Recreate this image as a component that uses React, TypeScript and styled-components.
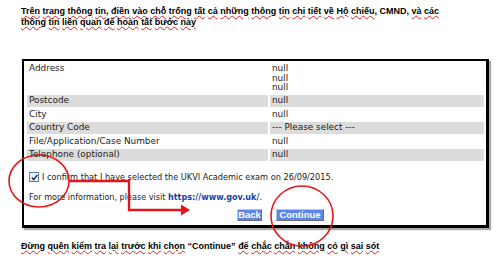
import React from "react";
import styled, { createGlobalStyle } from "styled-components";

const Global = createGlobalStyle`
  html, body { margin: 0; padding: 0; background: #fff; }
  body { width: 500px; height: 262px; overflow: hidden; }
`;

const Page = styled.div`
  position: relative;
  width: 500px;
  height: 262px;
  padding: 6px 0 0 21px;
  box-sizing: border-box;
  font-family: "Liberation Sans", Arial, sans-serif;
`;

const Note = styled.p<{ $top?: number }>`
  margin: ${(p) => p.$top ?? 0}px 0 0 0;
  font-size: 9px;
  line-height: 11px;
  font-weight: bold;
  color: #000;
  width: 440px;
`;

const W = styled.span`
  text-decoration: underline wavy #e02020;
  text-decoration-thickness: 1px;
  text-underline-offset: 1px;
`;

const Frame = styled.div`
  margin: 31px 0 0 1px;
  width: 467px;
  height: 169px;
  box-sizing: border-box;
  border: 2px solid #000;
  border-right-width: 3px;
  border-bottom-width: 3px;
  box-shadow: 2px 2px 1px #a8a8a8;
  padding: 2px 2px 0 3px;
  font-family: "DejaVu Sans", Verdana, sans-serif;
  font-size: 7.8px;
  color: #222;
  display: flex;
  flex-direction: column;
`;

const Table = styled.div`
  display: grid;
  grid-template-columns: 241px 214px;
  column-gap: 2px;
  row-gap: 2px;
  font-size: 8.9px;
`;

const Cell = styled.div<{ $gray?: boolean; $tall?: boolean }>`
  background: ${(p) => (p.$gray ? "#dcdcdc" : "transparent")};
  height: ${(p) => (p.$tall ? "30px" : "11.5px")};
  line-height: ${(p) => (p.$tall ? "9.5px" : "11.5px")};
  padding: ${(p) => (p.$tall ? "1px 2px 0" : "0 2px")};
  box-sizing: border-box;
  white-space: nowrap;
`;

const Confirm = styled.label`
  display: flex;
  align-items: center;
  gap: 3px;
  margin: 11px 0 0 2px;
  height: 11px;
  font-size: 8.2px;
  white-space: nowrap;
`;

const Box = styled.span`
  width: 8px;
  height: 8px;
  flex: none;
  border: 1px solid #5a7fb8;
  background: #eef3fb;
  display: flex;
  align-items: center;
  justify-content: center;
`;

const Info = styled.div`
  margin: 9px 0 0 2px;
  line-height: 11px;
  font-size: 8.1px;
`;

const Link = styled.span`
  color: #1a3fa8;
  font-weight: bold;
`;

const Buttons = styled.div`
  display: flex;
  gap: 14px;
  margin: 6px 0 0 210px;
`;

const Btn = styled.span<{ $w: number }>`
  width: ${(p) => p.$w}px;
  height: 12px;
  box-sizing: border-box;
  background: #5c86ec;
  border: 1px solid #b7c6e6;
  border-right-color: #6d6d6d;
  border-bottom-color: #6d6d6d;
  color: #fff;
  font-family: "Liberation Sans", Arial, sans-serif;
  font-weight: bold;
  font-size: 9.5px;
  line-height: 10px;
  text-align: center;
  white-space: nowrap;
`;

const Overlay = styled.svg`
  position: absolute;
  left: 0;
  top: 0;
  pointer-events: none;
`;

const rows: [string, string, boolean][] = [
  ["Postcode", "null", true],
  ["City", "null", false],
  ["Country Code", "--- Please select ---", true],
  ["File/Application/Case Number", "null", false],
  ["Telephone (optional)", "null", true],
];

const words = (s: string, skip: string[] = []) =>
  s.split(" ").map((w, i, arr) => (
    <React.Fragment key={i}>
      {skip.includes(w) ? w : <W>{w.replace(/[,.]$/, "")}</W>}
      {!skip.includes(w) && /[,.]$/.test(w) ? w.slice(-1) : ""}
      {i < arr.length - 1 ? " " : ""}
    </React.Fragment>
  ));

export default function App() {
  return (
    <Page>
      <Global />
      <Note>
        {words(
          "Trên trang thông tin, điền vào chỗ trống tất cả những thông tin chi tiết về Hộ chiếu,"
        )}{" "}
        CMND, {words("và các thông tin liên quan để hoàn tất bước này")}
      </Note>
      <Frame>
        <Table>
          <Cell $tall>Address</Cell>
          <Cell $tall>
            null
            <br />
            null
            <br />
            null
          </Cell>
          {rows.map(([l, v, g]) => (
            <React.Fragment key={l}>
              <Cell $gray={g}>{l}</Cell>
              <Cell $gray={g}>{v}</Cell>
            </React.Fragment>
          ))}
        </Table>
        <Confirm>
          <Box>
            <svg width="7" height="7" viewBox="0 0 7 7">
              <path d="M0.8 3.6 L2.7 5.6 L6.3 1" stroke="#1b2f5a" strokeWidth="1.4" fill="none" />
            </svg>
          </Box>
          I confirm that I have selected the UKVI Academic exam on 26/09/2015.
        </Confirm>
        <Info>
          For more information, please visit <Link>https://www.gov.uk/</Link>.
        </Info>
        <Buttons>
          <Btn $w={25}>Back</Btn>
          <Btn $w={48}>Continue</Btn>
        </Buttons>
      </Frame>
      <Note $top={13}>
        {words("Đừng quên kiểm tra lại trước khi chọn")} “Continue”{" "}
        {words("để chắc chắn không có gì sai sót")}
      </Note>
      <Overlay width="500" height="262" viewBox="0 0 500 262">
        <ellipse cx="39" cy="181" rx="30" ry="26" fill="none" stroke="#e8141c" strokeWidth="1.6" />
        <ellipse cx="302" cy="216" rx="31" ry="30" fill="none" stroke="#e8141c" strokeWidth="1.6" />
        <path d="M69 181 H129 V210 H183" fill="none" stroke="#e8141c" strokeWidth="2.4" />
        <path d="M181 204.5 L190 210 L181 215.5 Z" fill="#e8141c" />
      </Overlay>
    </Page>
  );
}
